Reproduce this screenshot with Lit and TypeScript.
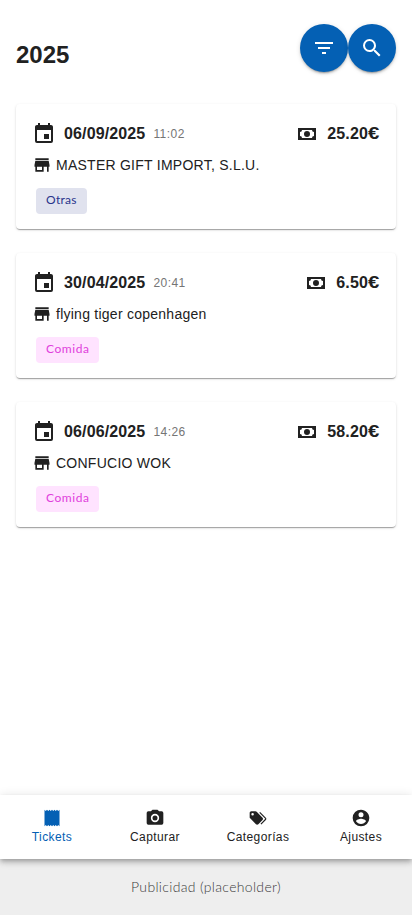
import { LitElement, html, css, svg } from "lit";
import { customElement, property } from "lit/decorators.js";
import { classMap } from "lit/directives/class-map.js";

const ICONS: Record<string, string> = {
  filter: "M6,13H18V11H6M3,6V8H21V6M10,18H14V16H10V18Z",
  magnify:
    "M9.5,3A6.5,6.5 0 0,1 16,9.5C16,11.11 15.41,12.59 14.44,13.73L14.71,14H15.5L20.5,19L19,20.5L14,15.5V14.71L13.73,14.44C12.59,15.41 11.11,16 9.5,16A6.5,6.5 0 0,1 3,9.5A6.5,6.5 0 0,1 9.5,3M9.5,5C7,5 5,7 5,9.5C5,12 7,14 9.5,14C12,14 14,12 14,9.5C14,7 12,5 9.5,5Z",
  calendar:
    "M19,19H5V8H19M16,1V3H8V1H6V3H5C3.89,3 3,3.89 3,5V19A2,2 0 0,0 5,21H19A2,2 0 0,0 21,19V5C21,3.89 20.1,3 19,3H18V1M17,12H12V17H17V12Z",
  store: "M12,18H6V14H12M21,14V12L20,7H4L3,12V14H4V20H14V14H18V20H20V14M20,4H4V6H20V4Z",
  cash: "M3,6H21V18H3V6M12,9A3,3 0 0,1 15,12A3,3 0 0,1 12,15A3,3 0 0,1 9,12A3,3 0 0,1 12,9M7,8A2,2 0 0,1 5,10V14A2,2 0 0,1 7,16H17A2,2 0 0,1 19,14V10A2,2 0 0,1 17,8H7Z",
  receipt:
    "M3,22L4.5,20.5L6,22L7.5,20.5L9,22L10.5,20.5L12,22L13.5,20.5L15,22L16.5,20.5L18,22L19.5,20.5L21,22V2L19.5,3.5L18,2L16.5,3.5L15,2L13.5,3.5L12,2L10.5,3.5L9,2L7.5,3.5L6,2L4.5,3.5L3,2Z",
  camera:
    "M4,4H7L9,2H15L17,4H20A2,2 0 0,1 22,6V18A2,2 0 0,1 20,20H4A2,2 0 0,1 2,18V6A2,2 0 0,1 4,4M12,7A5,5 0 0,0 7,12A5,5 0 0,0 12,17A5,5 0 0,0 17,12A5,5 0 0,0 12,7M12,9A3,3 0 0,1 15,12A3,3 0 0,1 12,15A3,3 0 0,1 9,12A3,3 0 0,1 12,9Z",
  tags: "M5.5,9A1.5,1.5 0 0,0 7,7.5A1.5,1.5 0 0,0 5.5,6A1.5,1.5 0 0,0 4,7.5A1.5,1.5 0 0,0 5.5,9M17.41,11.58C17.77,11.94 18,12.44 18,13C18,13.55 17.78,14.05 17.41,14.41L12.41,19.41C12.05,19.77 11.55,20 11,20C10.45,20 9.95,19.78 9.58,19.41L2.59,12.42C2.22,12.05 2,11.55 2,11V6C2,4.89 2.89,4 4,4H9C9.55,4 10.05,4.22 10.41,4.58L17.41,11.58M13.54,5.71L14.54,4.71L21.41,11.58C21.78,11.94 22,12.45 22,13C22,13.55 21.78,14.05 21.42,14.41L16.04,19.79L15.04,18.79L20.75,13L13.54,5.71Z",
  account:
    "M12,19.2C9.5,19.2 7.29,17.92 6,16C6.03,14 10,12.9 12,12.9C14,12.9 17.97,14 18,16C16.71,17.92 14.5,19.2 12,19.2M12,5A3,3 0 0,1 15,8A3,3 0 0,1 12,11A3,3 0 0,1 9,8A3,3 0 0,1 12,5M12,2A10,10 0 0,0 2,12A10,10 0 0,0 12,22A10,10 0 0,0 22,12C22,6.47 17.5,2 12,2Z",
};

interface Ticket {
  date: string;
  time: string;
  amount: string;
  store: string;
  category: string;
}

const TICKETS: Ticket[] = [
  { date: "06/09/2025", time: "11:02", amount: "25.20", store: "MASTER GIFT IMPORT, S.L.U.", category: "Otras" },
  { date: "30/04/2025", time: "20:41", amount: "6.50", store: "flying tiger copenhagen", category: "Comida" },
  { date: "06/06/2025", time: "14:26", amount: "58.20", store: "CONFUCIO WOK", category: "Comida" },
];

const TABS = [
  { icon: "receipt", label: "Tickets" },
  { icon: "camera", label: "Capturar" },
  { icon: "tags", label: "Categorías" },
  { icon: "account", label: "Ajustes" },
];

@customElement("app-icon")
class AppIcon extends LitElement {
  static styles = css`
    :host {
      display: block;
      flex: none;
      width: 24px;
      height: 24px;
    }
    .glyph {
      display: block;
      width: 100%;
      height: 100%;
      fill: currentColor;
    }
  `;
  @property() name = "";
  render() {
    return html`<svg class="glyph" viewBox="0 0 24 24">${svg`<path d=${ICONS[this.name]}></path>`}</svg>`;
  }
}

@customElement("ticket-card")
class TicketCard extends LitElement {
  static styles = css`
    :host {
      display: block;
      box-sizing: border-box;
      height: 125px;
      padding: 16px;
      border-radius: 4px;
      background: #fff;
      box-shadow: 0 2px 1px -1px rgba(0, 0, 0, 0.2), 0 1px 1px 0 rgba(0, 0, 0, 0.14),
        0 1px 3px 0 rgba(0, 0, 0, 0.12);
    }
    .top {
      display: flex;
      align-items: center;
      height: 28px;
    }
    .date {
      margin-left: 8px;
      font-size: 16px;
      font-weight: 700;
      letter-spacing: 0.13px;
    }
    .time {
      margin-left: 8px;
      font-size: 12px;
      letter-spacing: 0.45px;
      color: #757575;
    }
    .amount {
      display: flex;
      align-items: center;
      gap: 8px;
      margin-left: auto;
      font-size: 16px;
      font-weight: 700;
      letter-spacing: 0.13px;
    }
    .currency {
      display: inline-block;
      width: 12px;
      transform: scaleX(1.27);
      transform-origin: left;
    }
    .store {
      display: flex;
      align-items: center;
      gap: 4px;
      height: 20px;
      margin-top: 7px;
      font-size: 14px;
      letter-spacing: 0.25px;
    }
    .small {
      width: 20px;
      height: 20px;
    }
    .chip {
      display: inline-block;
      box-sizing: border-box;
      height: 26px;
      margin: 13px 0 0 4px;
      padding: 0 10px;
      border-radius: 4px;
      font: 12px/24px Lato, sans-serif;
      letter-spacing: 0.3px;
      background: #e0e2ee;
      color: #28348c;
    }
    .food {
      letter-spacing: 0.55px;
      background: #ffe3ff;
      color: #e040dc;
    }
  `;
  @property({ attribute: false }) ticket!: Ticket;
  render() {
    const t = this.ticket;
    return html`
      <div class="top">
        <app-icon name="calendar"></app-icon>
        <span class="date">${t.date}</span>
        <span class="time">${t.time}</span>
        <span class="amount"
          ><app-icon name="cash"></app-icon><span>${t.amount}<span class="currency">€</span></span></span
        >
      </div>
      <div class="store"><app-icon class="small" name="store"></app-icon>${t.store}</div>
      <span class=${classMap({ chip: true, food: t.category === "Comida" })}>${t.category}</span>
    `;
  }
}

@customElement("app-root")
class AppRoot extends LitElement {
  static styles = css`
    :host {
      display: flex;
      flex-direction: column;
      height: 100vh;
      overflow: hidden;
      background: #fff;
      color: #212121;
      font-family: "Liberation Sans", Arial, sans-serif;
    }
    .header {
      display: flex;
      justify-content: space-between;
      height: 48px;
      padding: 24px 16px 32px;
    }
    .title {
      margin: 15px 0 0;
      font-size: 24px;
      line-height: 32px;
      font-weight: 700;
    }
    .actions {
      display: flex;
    }
    .round {
      display: grid;
      place-items: center;
      width: 48px;
      height: 48px;
      padding: 0;
      border: 0;
      border-radius: 50%;
      background: #0460b4;
      color: #fff;
      box-shadow: 0 3px 1px -2px rgba(0, 0, 0, 0.2), 0 2px 2px 0 rgba(0, 0, 0, 0.14),
        0 1px 5px 0 rgba(0, 0, 0, 0.12);
    }
    .list {
      display: flex;
      flex: 1;
      flex-direction: column;
      gap: 24px;
      padding: 0 16px;
    }
    .nav {
      z-index: 1;
      display: grid;
      grid-template-columns: repeat(4, 1fr);
      height: 64px;
      background: #fff;
      box-shadow: 0 2px 4px -1px rgba(0, 0, 0, 0.2), 0 4px 5px 0 rgba(0, 0, 0, 0.14),
        0 1px 10px 0 rgba(0, 0, 0, 0.12);
    }
    .tab {
      display: flex;
      flex-direction: column;
      align-items: center;
      padding: 13px 0 0 1px;
      font-size: 12px;
      line-height: 18px;
      letter-spacing: 0.4px;
    }
    .tab-icon {
      width: 20px;
      height: 20px;
      margin-right: 1px;
    }
    .active {
      color: #0460b4;
    }
    .ad {
      display: grid;
      place-items: center;
      height: 56px;
      padding-bottom: 1px;
      box-sizing: border-box;
      background: #eee;
      color: #3c3c3c;
      font-family: Lato, sans-serif;
      font-size: 14px;
      font-weight: 300;
      letter-spacing: 0.33px;
    }
  `;
  render() {
    return html`
      <header class="header">
        <h1 class="title">2025</h1>
        <div class="actions">
          <button class="round" aria-label="Filtrar"><app-icon name="filter"></app-icon></button>
          <button class="round" aria-label="Buscar"><app-icon name="magnify"></app-icon></button>
        </div>
      </header>
      <main class="list">${TICKETS.map((t) => html`<ticket-card .ticket=${t}></ticket-card>`)}</main>
      <nav class="nav">
        ${TABS.map(
          (tab, i) => html`<div class=${classMap({ tab: true, active: i === 0 })}>
            <app-icon class="tab-icon" name=${tab.icon}></app-icon>${tab.label}
          </div>`
        )}
      </nav>
      <footer class="ad">Publicidad (placeholder)</footer>
    `;
  }
}
